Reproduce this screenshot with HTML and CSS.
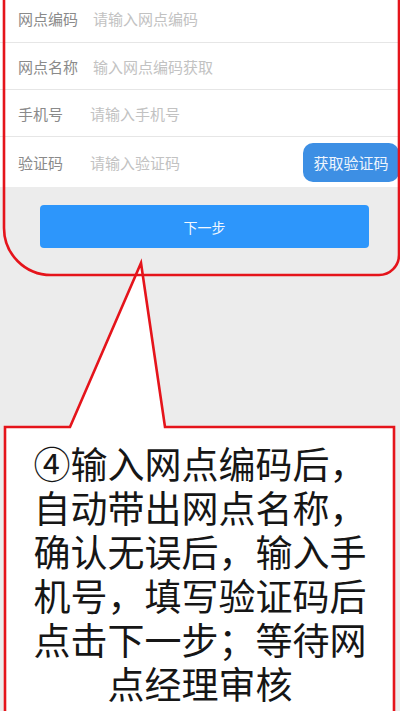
FILE: index.html
```html
<!DOCTYPE html>
<html lang="zh-CN">
<head>
<meta charset="utf-8">
<link rel="stylesheet" href="styles.css">
</head>
<body>
<div class="page">
  <div class="form">
    <div class="row first">
      <span class="label">网点编码</span>
      <span class="ph">请输入网点编码</span>
    </div>
    <div class="row">
      <span class="label">网点名称</span>
      <span class="ph">输入网点编码获取</span>
    </div>
    <div class="row">
      <span class="label">手机号</span>
      <span class="ph">请输入手机号</span>
    </div>
    <div class="row last">
      <span class="label">验证码</span>
      <span class="ph">请输入验证码</span>
      <span class="code-btn">获取验证码</span>
    </div>
  </div>
  <div class="next-wrap">
    <div class="next-btn">下一步</div>
  </div>

  <div class="annot">
    <svg class="annot-svg" width="400" height="711" viewBox="0 0 400 711">
      <path d="M5 427 L70 427 L141 263 L165 427 L394 427 L394 711 L5 711 Z" fill="#ffffff" stroke="none"/>
      <path d="M4 0 L4 228 A47 47 0 0 0 51 275 L379 275 A20 20 0 0 0 399 255 L399 0" fill="none" stroke="#e5141b" stroke-width="2.6"/>
      <path d="M5 712 L5 427 L70 427 L141 263 L165 427 L394 427 L394 712" fill="none" stroke="#e5141b" stroke-width="2.6" stroke-linejoin="miter"/>
    </svg>
    <div class="note">④输入网点编码后，<br>自动带出网点名称，<br>确认无误后，输入手<br>机号，填写验证码后<br>点击下一步；等待网<br>点经理审核</div>
  </div>
</div>
</body>
</html>
```

FILE: styles.css
```css
html, body {
  margin: 0;
  padding: 0;
}
body {
  background: #ececec;
  font-family: "Noto Sans CJK SC", "Noto Sans", sans-serif;
}
.page {
  position: relative;
  width: 400px;
  height: 711px;
  overflow: hidden;
  background: #ececec;
}
.form {
  background: #ffffff;
}
.row {
  display: flex;
  align-items: center;
  height: 47px;
  padding-left: 18px;
  border-bottom: 1px solid #e6e6e6;
  box-sizing: border-box;
  font-size: 15px;
}
.row.first {
  height: 43px;
  padding-bottom: 5px;
}
.row.last {
  height: 50px;
  border-bottom: none;
  padding-right: 1px;
}
.label {
  color: #8a8a8a;
  min-width: 57px;
  margin-right: 15px;
}
.ph {
  color: #c2c2c2;
  flex: 1;
}
.code-btn {
  background: #3d8fe4;
  color: #eef5fd;
  border-radius: 10px;
  height: 39px;
  width: 96px;
  display: flex;
  align-items: center;
  justify-content: center;
  font-size: 15px;
}
.next-wrap {
  padding: 18px 31px 0 40px;
}
.next-btn {
  height: 43px;
  background: #2d96fb;
  border-radius: 4px;
  color: #f2f8ff;
  font-size: 14px;
  display: flex;
  align-items: center;
  justify-content: center;
}
.annot {
  position: absolute;
  left: 0;
  top: 0;
  width: 400px;
  height: 711px;
}
.annot-svg {
  position: absolute;
  left: 0;
  top: 0;
  display: block;
}
.note {
  position: absolute;
  left: 0;
  right: 0;
  top: 441px;
  text-align: center;
  font-size: 37px;
  line-height: 44px;
  color: #161616;
  white-space: nowrap;
}
```
